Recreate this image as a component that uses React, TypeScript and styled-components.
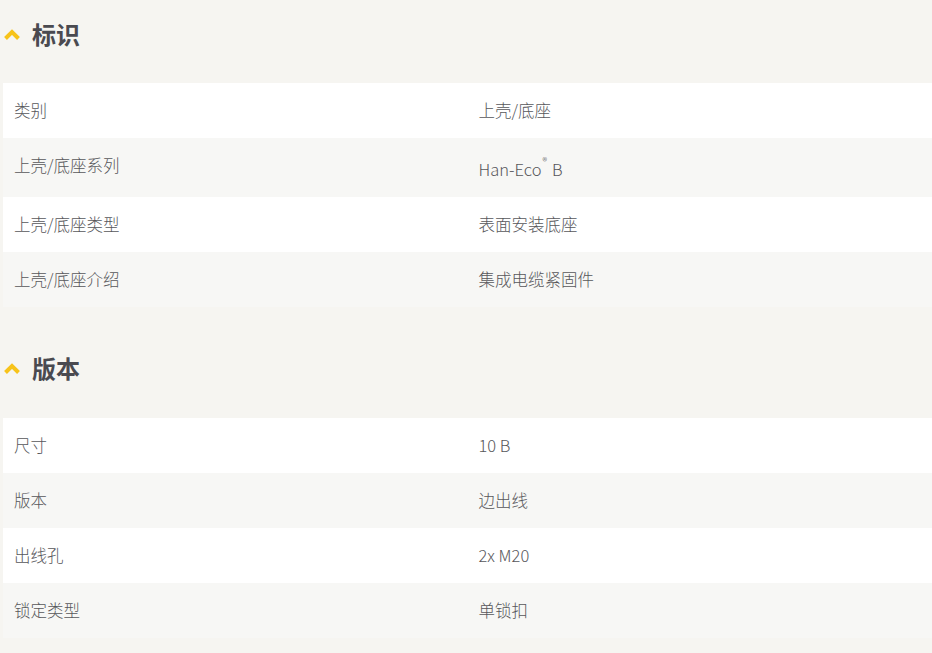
import * as React from "react";
import styled, { createGlobalStyle } from "styled-components";

const FOND = "#f6f5f1";
const LIGNE_CLAIRE = "#ffffff";
const LIGNE_GRISE = "#f7f7f5";
const JAUNE = "#f7c31a";
const TITRE = "#4a4a50";
const TEXTE = "#57575b";

const Global = createGlobalStyle`
    html, body {
        margin: 0;
        padding: 0;
        background: ${FOND};
    }
    body {
        font-family: "Noto Sans CJK SC", "Noto Sans", sans-serif;
    }
`;

interface Ligne {
    libelle: string;
    valeur: React.ReactNode;
}

interface Section {
    titre: string;
    lignes: Ligne[];
}

const Page = styled.div`
    background: ${FOND};
    min-height: 100vh;
    padding: 0 0 20px 0;
`;

const Bloc = styled.section`
    display: flex;
    flex-direction: column;
    & + & {
        margin-top: 28px;
    }
`;

const Entete = styled.h2`
    margin: 0;
    height: 70px;
    box-sizing: border-box;
    padding: 0 0 4px 4px;
    display: flex;
    align-items: center;
    gap: 12px;
    font-size: 24px;
    font-weight: 700;
    color: ${TITRE};
    font-family: "Noto Sans CJK SC", sans-serif;
`;

const Chevron = styled.svg`
    flex: none;
    width: 16px;
    height: 11px;
    margin-top: 2px;
`;

const Tableau = styled.div`
    margin: 13px 0 0 3px;
    display: flex;
    flex-direction: column;
`;

const Rangee = styled.div<{ $grise: boolean }>`
    display: grid;
    grid-template-columns: 1fr 1fr;
    background: ${props => props.$grise ? LIGNE_GRISE : LIGNE_CLAIRE};
`;

const Cellule = styled.div`
    padding: 18px 11px;
    line-height: 19px;
    font-size: 16.5px;
    font-weight: 300;
    color: ${TEXTE};
    font-family: "Noto Sans CJK SC", "Noto Sans", sans-serif;
`;

const Exposant = styled.sup`
    font-size: 10px;
    line-height: 10px;
    vertical-align: 10.5px;
    margin: 0 5px 0 1px;
`;

const sections: Section[] = [
    {
        titre: "标识",
        lignes: [
            { libelle: "类别", valeur: "上壳/底座" },
            { libelle: "上壳/底座系列", valeur: <>Han-Eco<Exposant>®</Exposant>B</> },
            { libelle: "上壳/底座类型", valeur: "表面安装底座" },
            { libelle: "上壳/底座介绍", valeur: "集成电缆紧固件" },
        ],
    },
    {
        titre: "版本",
        lignes: [
            { libelle: "尺寸", valeur: "10 B" },
            { libelle: "版本", valeur: "边出线" },
            { libelle: "出线孔", valeur: "2x M20" },
            { libelle: "锁定类型", valeur: "单锁扣" },
        ],
    },
];

export default function App() {
    return (
        <Page>
            <Global />
            {sections.map(s =>
                <Bloc key={s.titre}>
                    <Entete>
                        <Chevron viewBox="0 0 16 11">
                            <path d="M1.5 9.5 L8 3 L14.5 9.5" fill="none" stroke={JAUNE} strokeWidth="4" strokeLinecap="butt" strokeLinejoin="miter" />
                        </Chevron>
                        {s.titre}
                    </Entete>
                    <Tableau>
                        {s.lignes.map((l, i) =>
                            <Rangee key={l.libelle} $grise={i % 2 === 1}>
                                <Cellule>{l.libelle}</Cellule>
                                <Cellule>{l.valeur}</Cellule>
                            </Rangee>
                        )}
                    </Tableau>
                </Bloc>
            )}
        </Page>
    );
}
